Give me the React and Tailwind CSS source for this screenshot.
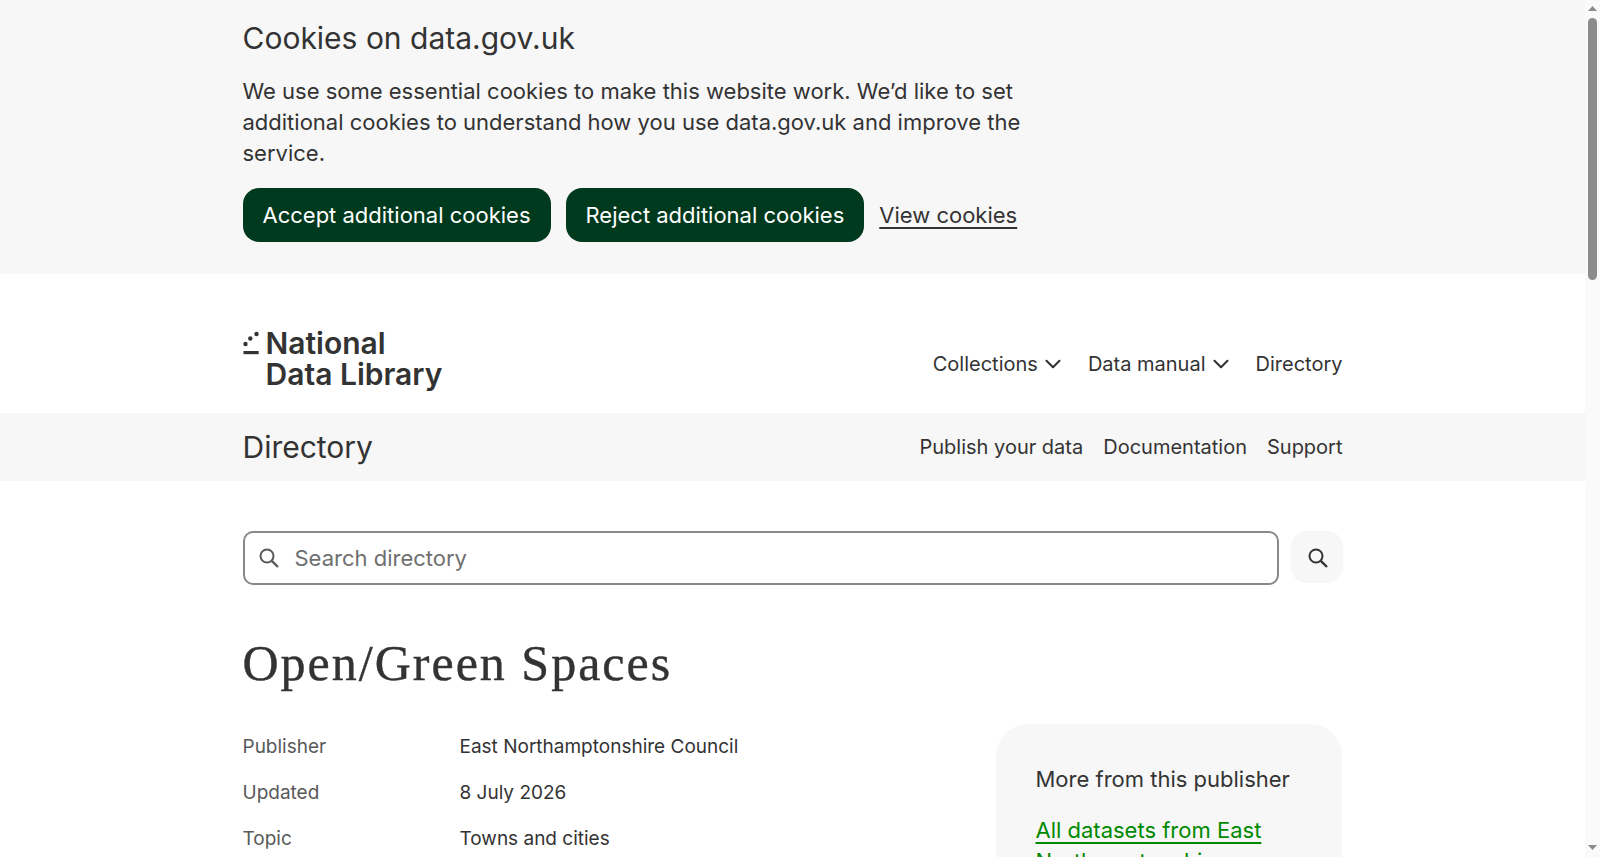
import React from "react";

function Logo() {
  return (
    <a className="flex items-start text-[#333333]">
      <svg width="23" height="30" viewBox="0 0 23 30" className="shrink-0" fill="#333333">
        <circle cx="2.5" cy="16" r="2.2" />
        <circle cx="7.3" cy="10.5" r="2.2" />
        <circle cx="13.5" cy="6" r="2.2" />
        <rect x="0.5" y="23" width="15.2" height="3.2" />
      </svg>
      <span className="text-[30px] leading-[31px] font-semibold">National<br />Data Library</span>
    </a>
  );
}

function Chevron() {
  return (
    <svg width="26" height="26" viewBox="0 0 24 24" fill="none" stroke="currentColor" strokeWidth="1.9" strokeLinecap="round" strokeLinejoin="round" className="ml-[2px]">
      <path d="m6 9 6 6 6-6" />
    </svg>
  );
}

function SearchIcon({ className }) {
  return (
    <svg width="20" height="20" viewBox="0 0 20 20" fill="none" stroke="currentColor" strokeWidth="2" className={className}>
      <circle cx="8" cy="8" r="6.5" />
      <path d="M12.8 12.8 19 19" strokeWidth="2.4" />
    </svg>
  );
}

function Scrollbar() {
  return (
    <div className="w-[15px] h-[857px] shrink-0 bg-[#fafafa] flex flex-col items-center pt-[6px] pb-[7px]">
      <svg width="9" height="5" viewBox="0 0 9 5" fill="#8a8a8a"><path d="M4.5 0 9 5H0z" /></svg>
      <div className="mt-[7px] w-[9px] h-[262px] rounded-[5px] bg-[#8c8c8c]" />
      <svg width="9" height="5" viewBox="0 0 9 5" fill="#8a8a8a" className="mt-auto"><path d="M0 0h9L4.5 5z" /></svg>
    </div>
  );
}

export default function App() {
  return (
    <div className="flex h-[857px] overflow-hidden font-['Inter',sans-serif] text-[#333333] bg-white">
      <div className="flex-1 min-w-0">
        <section className="bg-[#f7f7f7] h-[274px] pt-[18px]">
          <div className="w-[1100px] mx-auto">
            <h2 className="text-[30px] leading-[40px] font-normal">Cookies on data.gov.uk</h2>
            <p className="mt-[18px] w-[800px] text-[22px] leading-[31px]">We use some essential cookies to make this website work. We’d like to set additional cookies to understand how you use data.gov.uk and improve the service.</p>
            <div className="mt-[19px] flex items-center gap-[15px]">
              <button className="h-[54px] px-[20px] rounded-[16px] bg-[#003a1e] text-white text-[22px]">Accept additional cookies</button>
              <button className="h-[54px] px-[20px] rounded-[16px] bg-[#003a1e] text-white text-[22px]">Reject additional cookies</button>
              <a className="text-[22px] underline underline-offset-4">View cookies</a>
            </div>
          </div>
        </section>
        <header className="h-[139px] pt-[54px]">
          <div className="w-[1100px] mx-auto flex items-start justify-between">
            <Logo />
            <nav className="flex items-center gap-[22px] text-[20px] mt-[21px]">
              <a className="flex items-center">Collections <Chevron /></a>
              <a className="flex items-center">Data manual <Chevron /></a>
              <a>Directory</a>
            </nav>
          </div>
        </header>
        <div className="bg-[#f7f7f7] h-[68px]">
          <div className="w-[1100px] mx-auto h-full flex items-center justify-between">
            <span className="text-[30px]">Directory</span>
            <nav className="flex items-center gap-[20px] text-[20px]">
              <a>Publish your data</a>
              <a>Documentation</a>
              <a>Support</a>
            </nav>
          </div>
        </div>
        <main className="w-[1100px] mx-auto pt-[50px]">
          <form className="flex items-start gap-[12px]">
            <div className="flex-1 h-[54px] rounded-[10px] border-2 border-[#888888] flex items-center pl-[14px]">
              <SearchIcon className="text-[#595959]" />
              <span className="ml-[16px] text-[22px] text-[#6f6f6f]">Search directory</span>
            </div>
            <button className="w-[52px] h-[52px] rounded-[16px] bg-[#f7f7f7] flex items-center justify-center pl-[2px] pt-[2px]">
              <SearchIcon />
            </button>
          </form>
          <h1 className="mt-[46px] font-['Liberation_Serif',serif] text-[50px] leading-[64px] tracking-[2px] [-webkit-text-stroke:0.4px_#333333] font-normal">Open/Green Spaces</h1>
          <div className="mt-[29px] flex items-start justify-between">
            <dl className="grid grid-cols-[217px_auto] gap-y-[18px] text-[19px] leading-[28px] mt-[9px]">
              <dt className="text-[#595959]">Publisher</dt><dd>East Northamptonshire Council</dd>
              <dt className="text-[#595959]">Updated</dt><dd>8 July 2026</dd>
              <dt className="text-[#595959]">Topic</dt><dd>Towns and cities</dd>
            </dl>
            <aside className="w-[346px] mr-[1px] rounded-[32px] bg-[#f7f7f7] px-[40px] pt-[39px] pb-[40px]">
              <h3 className="text-[22px] leading-[32px] font-normal">More from this publisher</h3>
              <a className="block mt-[20px] text-[22px] leading-[31px] text-[#008a00] underline decoration-2 underline-offset-4">All datasets from East Northamptonshire Council</a>
            </aside>
          </div>
        </main>
      </div>
      <Scrollbar />
    </div>
  );
}
